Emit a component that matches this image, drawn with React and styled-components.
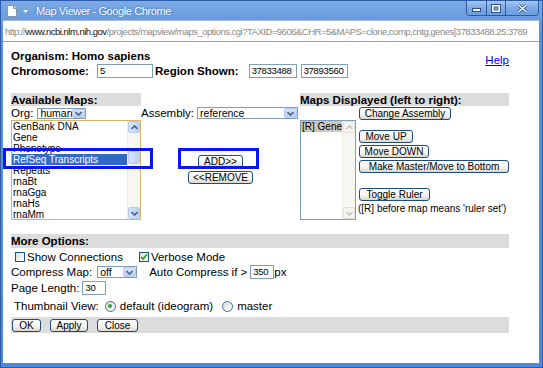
import React from "react";
import styled, { createGlobalStyle } from "styled-components";

const GlobalStyle = createGlobalStyle`
  html, body { margin: 0; padding: 0; background: #fff; }
  body { font-family: "Liberation Sans", Arial, sans-serif; color: #000; }
`;

const Frame = styled.div`
  width: 543px;
  height: 368px;
  box-sizing: border-box;
  display: flex;
  flex-direction: column;
  background: linear-gradient(#7daae6, #5e92dc 30px, #5089d8);
  border: 1px solid #2c5ca6;
  padding: 0 3px 4px 2px;
  overflow: hidden;
`;

const TitleBar = styled.div`
  height: 19px;
  display: flex;
  align-items: center;
  padding-left: 4px;
`;

const TitleText = styled.span`
  color: #fff;
  font-size: 11px;
  letter-spacing: -0.4px;
  margin-left: 6px;
  text-shadow: 0 0 2px #2d5b9c;
`;

const WinButtons = styled.div`
  margin-left: auto;
  margin-top: -4px;
  display: flex;
  border: 1px solid #2b5a9e;
  border-top: none;
  border-radius: 0 0 4px 4px;
  overflow: hidden;
`;

const WinBtn = styled.div`
  width: ${(p) => p.$w}px;
  height: 14px;
  display: flex;
  align-items: center;
  justify-content: center;
  background: linear-gradient(#a6c6f0, #7eaae6 50%, #6a9ce0);
  border-left: ${(p) => (p.$first ? "none" : "1px solid #2b5a9e")};
`;

const UrlBar = styled.div`
  height: 22px;
  box-sizing: border-box;
  background: #fff;
  border-top: 1px solid #a8bedf;
  border-bottom: 1px solid #8ea6cc;
  display: flex;
  align-items: center;
  padding-left: 2px;
  white-space: nowrap;
  overflow: hidden;
`;

const UrlText = styled.span`
  font-size: 9.5px;
  letter-spacing: -0.5px;
  color: #8a8a8a;
`;

const UrlHost = styled.span`
  color: #111;
`;

const Page = styled.div`
  flex: 1;
  background: #fff;
  position: relative;
  padding: 8px 8px 0 8px;
  font-size: 11.5px;
`;

const HeaderRow = styled.div`
  width: 498px;
  display: flex;
  align-items: center;
`;

const HeaderLeft = styled.div`
  display: flex;
  flex-direction: column;
  gap: 1px;
`;

const Bold = styled.span`
  font-weight: bold;
  font-size: 11.5px;
  line-height: 13px;
`;

const InputRow = styled.div`
  display: flex;
  align-items: center;
  gap: ${(p) => p.$gap || 3}px;
  height: 14px;
`;

const TextInput = styled.div`
  width: ${(p) => p.$w}px;
  height: 14px;
  box-sizing: border-box;
  border: 1px solid #7f9db9;
  font-size: 9.5px;
  letter-spacing: -0.3px;
  line-height: 12px;
  padding-left: 2px;
  margin-left: ${(p) => p.$ml || 0}px;
  white-space: nowrap;
  overflow: hidden;
`;

const HelpLink = styled.a`
  margin-left: auto;
  color: #0000ee;
  text-decoration: underline;
  font-size: 11.5px;
  margin-top: -8px;
`;

const MapsGrid = styled.div`
  margin-top: 15px;
  width: 498px;
  display: grid;
  grid-template-columns: 130px 159px 209px;
  grid-template-rows: 13px 14px 100px;
`;

const SectionBar = styled.div`
  background: #dcdcdc;
  height: ${(p) => p.$h || 13}px;
  display: flex;
  align-items: center;
  font-weight: bold;
  font-size: 11.5px;
  grid-column: ${(p) => p.$col || "auto"};
`;

const Cell = styled.div`
  display: flex;
  align-items: center;
  gap: ${(p) => p.$gap || 0}px;
`;

const SelectBox = styled.div`
  width: ${(p) => p.$w}px;
  height: ${(p) => p.$h || 12}px;
  box-sizing: border-box;
  border: 1px solid #7f9db9;
  display: flex;
  align-items: center;
  font-size: 10.5px;
  padding-left: 2px;
  margin-left: ${(p) => p.$ml || 0}px;
`;

const SelectArrow = styled.div`
  margin-left: auto;
  width: 13px;
  height: 100%;
  box-sizing: border-box;
  border: 1px solid #b7cbf2;
  border-radius: 2px;
  background: linear-gradient(#d8e4fc, #b9ccf6);
  display: flex;
  align-items: center;
  justify-content: center;
`;

const ListBox = styled.div`
  width: ${(p) => p.$w}px;
  height: 100px;
  box-sizing: border-box;
  border: 1px solid ${(p) => p.$border};
  display: flex;
  overflow: hidden;
`;

const ListItems = styled.div`
  flex: 1;
  font-size: 10px;
  line-height: 11px;
  overflow: hidden;
`;

const ListItem = styled.div`
  padding-left: 1px;
  white-space: nowrap;
  height: 11px;
  background: ${(p) => (p.$sel === "active" ? "#316ac5" : p.$sel === "inactive" ? "#cdc8bd" : "transparent")};
  color: ${(p) => (p.$sel === "active" ? "#fff" : "#000")};
`;

const ScrollBar = styled.div`
  width: 12px;
  display: flex;
  flex-direction: column;
  background: #f7f6f1;
  border-left: 1px solid #eeede5;
`;

const ScrollBtn = styled.div`
  height: 12px;
  box-sizing: border-box;
  border: 1px solid ${(p) => (p.$off ? "#e2e2dc" : "#b7cbf2")};
  border-radius: 2px;
  background: ${(p) => (p.$off ? "#f4f4f0" : "linear-gradient(90deg, #d9e5fd, #bccff7)")};
  display: flex;
  align-items: center;
  justify-content: center;
  margin-top: ${(p) => (p.$bottom ? "auto" : 0)};
`;

const Thumb = styled(ScrollBtn)`
  margin-top: ${(p) => p.$top}px;
  height: 13px;
`;

const XpButton = styled.div`
  height: 13px;
  box-sizing: border-box;
  border: 1px solid #1f4b7e;
  border-radius: 3px;
  background: linear-gradient(#ffffff, #f4f3ee 60%, #d8d6cc);
  font-size: 10px;
  line-height: 11px;
  white-space: nowrap;
  display: inline-flex;
  align-items: center;
  justify-content: center;
  width: ${(p) => p.$w}px;
  margin-top: ${(p) => p.$mt || 0}px;
  margin-left: ${(p) => p.$ml || 0}px;
`;

const MiddleCell = styled.div`
  display: flex;
  flex-direction: column;
  align-items: center;
  gap: 3px;
  padding-top: 35px;
`;

const RightLists = styled.div`
  display: flex;
  gap: 3px;
`;

const ButtonStack = styled.div`
  display: flex;
  flex-direction: column;
  align-items: flex-start;
  gap: 2px;
  padding-top: 10px;
`;

const Note = styled.span`
  font-size: 10px;
  margin-left: -1px;
  white-space: nowrap;
`;

const Options = styled.div`
  margin-top: 14px;
  width: 498px;
  display: flex;
  flex-direction: column;
`;

const OptRow = styled.div`
  display: flex;
  align-items: center;
  height: ${(p) => p.$h}px;
  padding-left: ${(p) => p.$pl || 0}px;
  white-space: nowrap;
`;

const CheckBox = styled.span`
  width: 10px;
  height: 10px;
  box-sizing: border-box;
  border: 1px solid #1c5180;
  background: linear-gradient(135deg, #dcdcd6, #fff);
  display: inline-flex;
  align-items: center;
  justify-content: center;
  margin: 0 2px 0 ${(p) => p.$ml || 0}px;
`;

const Radio = styled.span`
  width: 11px;
  height: 11px;
  box-sizing: border-box;
  border-radius: 50%;
  border: 1px solid #3b6e9f;
  background: linear-gradient(135deg, #dcdcd6, #fff);
  display: inline-flex;
  align-items: center;
  justify-content: center;
  margin: 0 4px 0 ${(p) => p.$ml || 0}px;

  &::after {
    content: "";
    width: 4px;
    height: 4px;
    border-radius: 50%;
    background: ${(p) => (p.$on ? "#2fa52f" : "transparent")};
  }
`;

const Gap = styled.span`
  margin-left: ${(p) => p.$ml}px;
`;

const BottomBar = styled.div`
  margin-top: 2px;
  height: 16px;
  background: #dcdcdc;
  display: flex;
  align-items: center;
  gap: 9px;
  padding-left: 1px;
`;

const Highlight = styled.div`
  position: absolute;
  left: ${(p) => p.$x}px;
  top: ${(p) => p.$y}px;
  width: ${(p) => p.$w}px;
  height: 21px;
  box-sizing: border-box;
  border: 3px solid #0a16f0;
  pointer-events: none;
`;

const Chevron = ({ up, color = "#4d6185" }) => (
  <svg width="7" height="5" viewBox="0 0 7 5">
    <path d={up ? "M0.5 4 L3.5 1 L6.5 4" : "M0.5 1 L3.5 4 L6.5 1"} fill="none" stroke={color} strokeWidth="1.6" />
  </svg>
);

const Select = ({ w, h, ml, children }) => (
  <SelectBox $w={w} $h={h} $ml={ml}>
    {children}
    <SelectArrow>
      <Chevron />
    </SelectArrow>
  </SelectBox>
);

const availableMaps = [
  "GenBank DNA",
  "Gene",
  "Phenotype",
  "RefSeq Transcripts",
  "Repeats",
  "rnaBt",
  "rnaGga",
  "rnaHs",
  "rnaMm",
];

export default function App() {
  return (
    <>
      <GlobalStyle />
      <Frame>
        <TitleBar>
          <svg width="10" height="12" viewBox="0 0 10 12">
            <path d="M0.5 0.5 H6.5 L9.5 3.5 V11.5 H0.5 Z" fill="#fff" stroke="#8a96a8" />
            <path d="M6.5 0.5 V3.5 H9.5" fill="#e4e8ee" stroke="#8a96a8" />
          </svg>
          <svg width="9" height="6" viewBox="0 0 9 6" style={{ marginLeft: 4 }}>
            <path d="M2 2 H7 L4.5 5 Z" fill="#fff" />
          </svg>
          <TitleText>Map Viewer - Google Chrome</TitleText>
          <WinButtons>
            <WinBtn $w={19} $first>
              <svg width="9" height="8" viewBox="0 0 9 8">
                <rect x="0.5" y="4.5" width="8" height="3" fill="#fff" stroke="#2b4f86" />
              </svg>
            </WinBtn>
            <WinBtn $w={18}>
              <svg width="10" height="9" viewBox="0 0 10 9">
                <rect x="0.5" y="0.5" width="9" height="8" fill="#fff" stroke="#2b4f86" />
                <rect x="3" y="3" width="4" height="3" fill="#7eaae6" stroke="#2b4f86" strokeWidth="0.8" />
              </svg>
            </WinBtn>
            <WinBtn $w={32}>
              <svg width="11" height="9" viewBox="0 0 11 9">
                <path d="M1.5 1 L9.5 8 M9.5 1 L1.5 8" stroke="#2b4f86" strokeWidth="3" />
                <path d="M1.5 1 L9.5 8 M9.5 1 L1.5 8" stroke="#fff" strokeWidth="1.5" />
              </svg>
            </WinBtn>
          </WinButtons>
        </TitleBar>

        <UrlBar>
          <UrlText>
            http://<UrlHost>www.ncbi.nlm.nih.gov</UrlHost>
            /projects/mapview/maps_options.cgi?TAXID=9606&amp;CHR=5&amp;MAPS=clone,comp,cntg,genes[37833488.25:3789
          </UrlText>
        </UrlBar>

        <Page>
          <HeaderRow>
            <HeaderLeft>
              <Bold>Organism: Homo sapiens</Bold>
              <InputRow $gap={2}>
                <Bold>Chromosome:</Bold>
                <TextInput $w={56} $ml={6}>5</TextInput>
                <Bold>Region Shown:</Bold>
                <TextInput $w={48} $ml={8}>37833488</TextInput>
                <TextInput $w={47} $ml={2}>37893560</TextInput>
              </InputRow>
            </HeaderLeft>
            <HelpLink href="#">Help</HelpLink>
          </HeaderRow>

          <MapsGrid>
            <SectionBar $col="1">Available Maps:</SectionBar>
            <div />
            <SectionBar $col="3">Maps Displayed (left to right):</SectionBar>

            <Cell $gap={4}>
              Org:
              <Select w={49} h={11}>human</Select>
            </Cell>
            <Cell $gap={3}>
              Assembly:
              <Select w={101}>reference</Select>
            </Cell>
            <Cell>
              <XpButton $ml={59} $w={92}>Change Assembly</XpButton>
            </Cell>

            <ListBox $w={130} $border="#d6b46c">
              <ListItems>
                {availableMaps.map((m) => (
                  <ListItem key={m} $sel={m === "RefSeq Transcripts" ? "active" : ""}>
                    {m}
                  </ListItem>
                ))}
              </ListItems>
              <ScrollBar>
                <ScrollBtn>
                  <Chevron up />
                </ScrollBtn>
                <Thumb $top={18} />
                <ScrollBtn $bottom>
                  <Chevron />
                </ScrollBtn>
              </ScrollBar>
            </ListBox>

            <MiddleCell>
              <XpButton $w={45}>ADD&gt;&gt;</XpButton>
              <XpButton $w={65}>&lt;&lt;REMOVE</XpButton>
            </MiddleCell>

            <RightLists>
              <ListBox $w={56} $border="#7f9db9">
                <ListItems>
                  <ListItem $sel="inactive">[R] Gene</ListItem>
                </ListItems>
                <ScrollBar>
                  <ScrollBtn $off>
                    <Chevron up color="#c8c8c0" />
                  </ScrollBtn>
                  <ScrollBtn $off $bottom>
                    <Chevron color="#c8c8c0" />
                  </ScrollBtn>
                </ScrollBar>
              </ListBox>
              <ButtonStack>
                <XpButton $w={54}>Move UP</XpButton>
                <XpButton $w={70}>Move DOWN</XpButton>
                <XpButton $w={150}>Make Master/Move to Bottom</XpButton>
                <XpButton $w={71} $mt={13}>Toggle Ruler</XpButton>
                <Note>([R] before map means 'ruler set')</Note>
              </ButtonStack>
            </RightLists>
          </MapsGrid>

          <Options>
            <SectionBar $h={14}>More Options:</SectionBar>
            <OptRow $h={17}>
              <CheckBox $ml={4} />
              Show Connections
              <CheckBox $ml={16}>
                <svg width="8" height="8" viewBox="0 0 8 8">
                  <path d="M1 4 L3 6 L7 1.5" fill="none" stroke="#21a121" strokeWidth="1.6" />
                </svg>
              </CheckBox>
              Verbose Mode
            </OptRow>
            <OptRow $h={14}>
              Compress Map:
              <Select w={40} ml={5}>off</Select>
              <Gap $ml={12}>Auto Compress if &gt;</Gap>
              <TextInput $w={24} $ml={3}>350</TextInput>
              px
            </OptRow>
            <OptRow $h={18}>
              Page Length:
              <TextInput $w={24} $ml={3}>30</TextInput>
            </OptRow>
            <OptRow $h={18} $pl={3}>
              Thumbnail View:
              <Radio $ml={6} $on />
              default (ideogram)
              <Radio $ml={9} />
              master
            </OptRow>
            <BottomBar>
              <XpButton $w={29}>OK</XpButton>
              <XpButton $w={38}>Apply</XpButton>
              <XpButton $w={41}>Close</XpButton>
            </BottomBar>
          </Options>

          <Highlight $x={0} $y={106} $w={150} />
          <Highlight $x={175} $y={106} $w={81} />
        </Page>
      </Frame>
    </>
  );
}
